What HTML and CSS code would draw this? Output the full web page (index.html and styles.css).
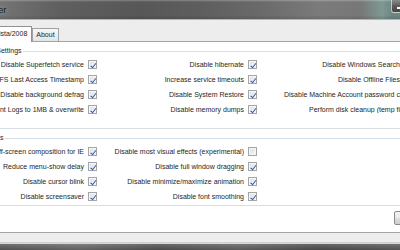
FILE: index.html
```html
<!DOCTYPE html>
<html lang="en">
<head>
  <meta charset="UTF-8">
  <title>Vista Tweaker</title>
  <link rel="stylesheet" href="styles.css">
</head>
<body>

  <div class="window">
    <div class="titlebar">
      <span class="title">Vista Tweaker</span>
      <div class="caption">
        <span class="capbtn min"></span>
        <span class="capbtn"></span>
        <span class="capbtn close"></span>
      </div>
    </div>

    <div class="client">
      <div class="tabs">
        <div class="tab active">Windows Vista/2008</div>
        <div class="tab">About</div>
      </div>

      <div class="panel">
        <fieldset class="group">
          <legend>System Settings</legend>
          <div class="opts">
            <label class="opt"><span>Disable Superfetch service</span><i class="cb on"></i></label>
            <label class="opt"><span>Disable hibernate</span><i class="cb on"></i></label>
            <label class="opt far"><span>Disable Windows Search</span><i class="cb on"></i></label>

            <label class="opt"><span>Disable NTFS Last Access Timestamp</span><i class="cb on"></i></label>
            <label class="opt"><span>Increase service timeouts</span><i class="cb on"></i></label>
            <label class="opt far"><span>Disable Offline Files</span><i class="cb on"></i></label>

            <label class="opt"><span>Disable background defrag</span><i class="cb on"></i></label>
            <label class="opt"><span>Disable System Restore</span><i class="cb on"></i></label>
            <label class="opt far"><span>Disable Machine Account password changes</span><i class="cb on"></i></label>

            <label class="opt"><span>Limit Event Logs to 1MB &amp; overwrite</span><i class="cb on"></i></label>
            <label class="opt"><span>Disable memory dumps</span><i class="cb on"></i></label>
            <label class="opt far cut"><span>Perform disk cleanup (temp files)</span><i class="cb on"></i></label>
          </div>
        </fieldset>

        <fieldset class="group second">
          <legend>UI Tweaks</legend>
          <div class="opts two">
            <label class="opt"><span>Disable off-screen composition for IE</span><i class="cb on"></i></label>
            <label class="opt"><span>Disable most visual effects (experimental)</span><i class="cb"></i></label>

            <label class="opt"><span>Reduce menu-show delay</span><i class="cb on"></i></label>
            <label class="opt"><span>Disable full window dragging</span><i class="cb on"></i></label>

            <label class="opt"><span>Disable cursor blink</span><i class="cb on"></i></label>
            <label class="opt"><span>Disable minimize/maximize animation</span><i class="cb on"></i></label>

            <label class="opt"><span>Disable screensaver</span><i class="cb on"></i></label>
            <label class="opt"><span>Disable font smoothing</span><i class="cb on"></i></label>
          </div>
        </fieldset>

        <div class="actions">
          <button class="btn">Apply</button>
        </div>
      </div>
    </div>

    <div class="frame-bottom"></div>
  </div>

</body>
</html>
```

FILE: styles.css
```css
* {
  box-sizing: border-box;
}
body {
  margin: 0;
  width: 400px;
  height: 250px;
  overflow: hidden;
  background-color: #4a4a4a;
  font-family: "Liberation Sans", Arial, sans-serif;
  font-size: 7px;
  color: #1e1e1e;
}
.window {
  width: 520px;
  margin-left: -60px;
}

/* glass title bar */
.titlebar {
  height: 20px;
  display: flex;
  align-items: center;
  padding-left: 10px;
  border-bottom: 1px solid #b4b4b4;
  background:
    linear-gradient(to bottom, rgba(255,255,255,.28) 0, rgba(255,255,255,0) 2px, rgba(0,0,0,0) 15px, rgba(0,0,0,.12) 19px),
    linear-gradient(to right, #747474 60px, #5f5f5f 120px, #575757 200px, #5e5e5e 260px, #6a6a6a 320px, #7b7b7b 380px, #777 420px, #7e9893 442px, #6d8782 452px);
}
.title {
  font-size: 9px;
  color: #141414;
  text-shadow: 0 0 5px rgba(255,255,255,.5);
}
.caption {
  margin-left: auto;
  margin-right: 7px;
  align-self: flex-start;
  display: flex;
}
.capbtn {
  width: 17px;
  height: 13px;
  border: 1px solid rgba(230,230,230,.75);
  border-top: none;
  background: linear-gradient(to bottom, #8b8b8b, #5a5a5a 50%, #444);
  position: relative;
}
.capbtn.min {
  border-bottom-left-radius: 3px;
}
.capbtn.min::after {
  content: "";
  position: absolute;
  left: 5px;
  top: 7px;
  width: 6px;
  height: 2px;
  background: #fff;
}
.capbtn.close {
  width: 28px;
  border-bottom-right-radius: 3px;
  background: linear-gradient(to bottom, #d99a8a, #b5432a 50%, #9a2a15);
}

/* client area */
.client {
  height: 223px;
  display: flex;
  flex-direction: column;
  padding: 0 6px 9px;
  background-color: #ededed;
  border-bottom: 1px solid #cfcfcf;
}
.tabs {
  display: flex;
  align-items: flex-end;
  height: 21px;
  padding-left: 13px;
}
.tab {
  height: 13px;
  line-height: 12px;
  padding: 0 3px;
  border: 1px solid #9fa3a8;
  border-bottom: none;
  background: linear-gradient(to bottom, #f7f7f7, #e4e4e4);
  white-space: nowrap;
}
.tab.active {
  height: 16px;
  line-height: 14px;
  padding: 0 4px;
  margin-bottom: -1px;
  background: #fff;
  border-color: #8e9196;
  position: relative;
  z-index: 1;
}
.panel {
  flex: 1;
  display: flex;
  flex-direction: column;
  padding: 5px 4px 7px;
  background: #fff;
  border: 1px solid #a0a4a9;
}

/* group boxes */
.group {
  margin: 0;
  padding: 2px 6px 11px 5px;
  border: 1px solid #d5dfe5;
  border-radius: 3px;
  min-width: 0;
}
.group.second {
  margin-top: 5px;
  padding-bottom: 1px;
}
.group legend {
  margin-left: 13px;
  padding: 0 1px;
  line-height: 8px;
  color: #1e1e1e;
}
.opts {
  display: grid;
  grid-template-columns: 140px 160px 156px;
  grid-auto-rows: 15px;
}
.opts.two {
  grid-template-columns: 140px 160px;
}
.opt {
  display: flex;
  align-items: center;
  justify-content: flex-end;
  gap: 4px;
  white-space: nowrap;
  color: #262626;
}
.opt.far span {
  width: 116px;
  overflow: hidden;
  text-align: right;
  flex-shrink: 0;
}
.opt.far.cut span {
  width: 91px;
}

/* vista style checkbox */
.cb {
  flex-shrink: 0;
  width: 9px;
  height: 9px;
  border: 1px solid #a2a6ab;
  background: linear-gradient(135deg, #dcdfe3, #f8f8f8);
  box-shadow: inset 0 0 0 1px #f6f6f6;
  position: relative;
}
.cb.on::after {
  content: "";
  position: absolute;
  left: 2.6px;
  top: 0.6px;
  width: 2px;
  height: 4.6px;
  border: solid #3656a8;
  border-width: 0 1.1px 1.1px 0;
  transform: rotate(38deg);
}

.actions {
  margin-top: auto;
  display: flex;
  justify-content: flex-end;
}
.btn {
  width: 50px;
  height: 14px;
  margin-right: 5px;
  padding: 0;
  font-family: inherit;
  font-size: 7px;
  color: #1e1e1e;
  border: 1px solid #8a8a8a;
  border-radius: 2px;
  background: linear-gradient(to bottom, #f2f2f2 0, #ebebeb 50%, #dddddd 51%, #cfcfcf 100%);
}

.frame-bottom {
  height: 8px;
  border-top: 1px solid #d8d8d8;
  background:
    linear-gradient(to bottom, rgba(255,255,255,.15), rgba(0,0,0,.15)),
    linear-gradient(to right, #575757 60px, #6a6a6a 140px, #505050 220px, #626262 300px, #4c4c4c 380px, #5a5a5a 460px);
}
```
